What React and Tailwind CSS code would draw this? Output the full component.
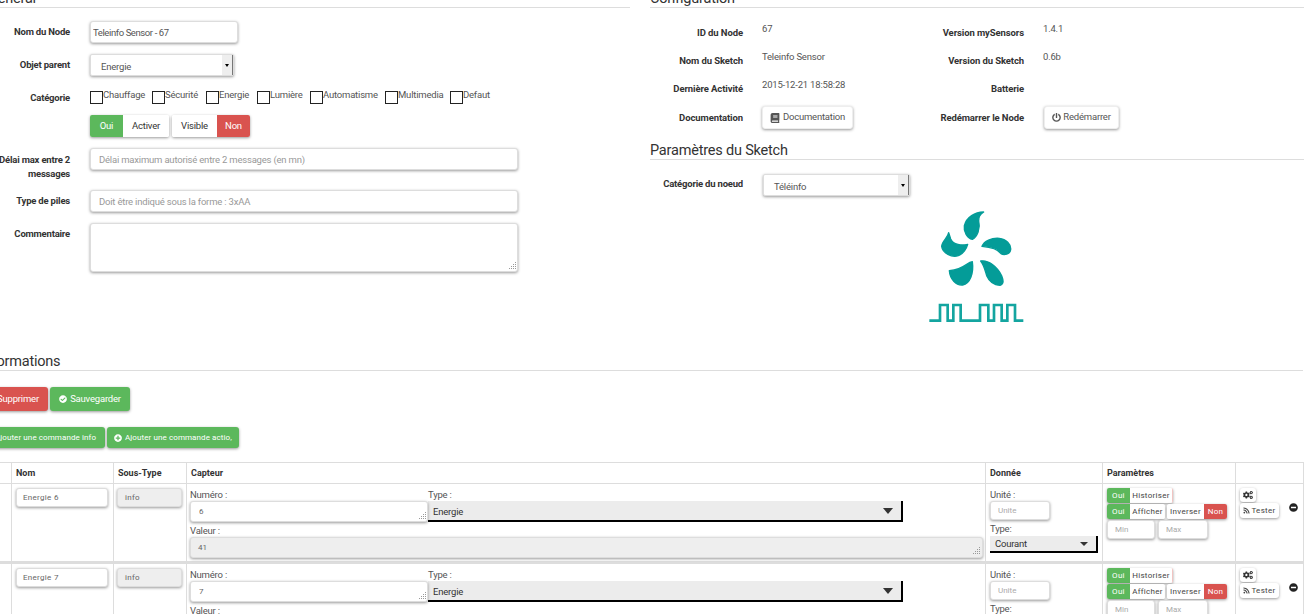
import React from "react";
import { FaBook, FaPowerOff, FaCheckCircle, FaPlusCircle, FaRss, FaCogs, FaMinusCircle } from "react-icons/fa";

const shadow = "shadow-[0_1px_3px_rgba(0,0,0,0.4)]";
const inputClass = `block border border-[#ddd] rounded-[3px] bg-white ${shadow} outline-none`;
const txt = "text-[9.5px] tracking-[-0.2px]";

function Grip() {
  return (
    <svg className="absolute right-[1px] bottom-[1px]" width="10" height="10" viewBox="0 0 10 10" fill="#999">
      <rect x="8" y="1" width="1" height="1" />
      <rect x="6" y="3" width="1" height="1" />
      <rect x="8" y="3" width="1" height="1" />
      <rect x="4" y="5" width="1" height="1" />
      <rect x="6" y="5" width="1" height="1" />
      <rect x="8" y="5" width="1" height="1" />
      <rect x="2" y="7" width="1" height="1" />
      <rect x="4" y="7" width="1" height="1" />
      <rect x="6" y="7" width="1" height="1" />
      <rect x="8" y="7" width="1" height="1" />
    </svg>
  );
}

function SectionTitle({ children, className }) {
  return (
    <h3 className={`flex h-[26px] items-end border-b border-[#ddd] text-[14.5px] leading-[16px] tracking-[-0.2px] text-[#333] ${className}`}>
      <span>{children}</span>
    </h3>
  );
}

function FormRow({ label, children, className, labelClass = "leading-[22px]" }) {
  return (
    <div className={`flex ${className}`}>
      <label className={`w-[82px] shrink-0 text-right font-bold text-[#333] ${txt} ${labelClass}`}>{label}</label>
      <div className="ml-[20px] flex-1">{children}</div>
    </div>
  );
}

function NativeSelect({ value, className }) {
  return (
    <div className={`flex items-stretch rounded-[2px] bg-white border border-[#ddd] ${shadow} ${className}`}>
      <span className={`flex-1 pl-[10px] leading-[23px] text-[#555] ${txt}`}>{value}</span>
      <span className="flex w-[11px] items-center justify-center border-r border-[#777] bg-[#eee]">
        <span className="border-x-[2px] border-t-[3px] border-x-transparent border-t-black" />
      </span>
    </div>
  );
}

function Check({ label, className }) {
  return (
    <div className={`flex items-start ${className}`}>
      <span className="mt-[1px] h-[13px] w-[13px] border border-[#222] bg-white" />
      <span className={`-mt-[1px] leading-[12px] text-[#555] ${txt}`}>{label}</span>
    </div>
  );
}

function InfoRow({ children, className }) {
  return <div className={`flex h-[28px] ${className}`}>{children}</div>;
}

function InfoLabel({ width, children }) {
  return <div className={`${width} shrink-0 pt-[4px] text-right text-[9.5px] font-bold leading-[14px] tracking-[-0.1px] text-[#333]`}>{children}</div>;
}

function InfoValue({ width, children }) {
  return <div className={`${width} ml-[19px] shrink-0 pt-[1px] leading-[12px] text-[#555] ${txt}`}>{children}</div>;
}

function Logo() {
  return (
    <svg width="115" height="125" viewBox="0 0 345 375" className="mx-auto block">
      <g fill="#049c98" stroke="#049c98" strokeWidth="4" strokeLinejoin="round">
        <path d="M191 21 C165 22 140 35 133 62 C130 80 142 100 157 103 C172 95 182 70 176 48 C175 38 180 28 191 21 Z" />
        <path d="M86 83 C84 98 66 108 65 124 C68 145 95 158 115 152 C130 147 140 130 143 118 C125 122 100 120 92 102 C90 95 88 89 86 83 Z" />
        <path d="M186 124 C192 108 215 98 238 100 C258 102 274 118 272 134 C270 148 252 152 243 146 C232 130 210 126 186 124 Z" />
        <path d="M157 170 C140 172 135 192 88 197 C90 222 108 242 128 240 C150 236 162 205 157 170 Z" />
        <path d="M182 168 C205 164 232 185 245 212 C250 225 253 235 240 241 C222 240 208 230 200 212 C195 195 192 180 182 168 Z" />
      </g>
      <path
        d="M28 347 H60 V300 H83 V347 H100 V300 H122 V347 H180 V300 H205 V347 H222 V300 H245 V347 H262 V300 H285 V347 H310"
        fill="none"
        stroke="#14a5a0"
        strokeWidth="8"
      />
    </svg>
  );
}

function Btn({ color, children, className }) {
  return <div className={`flex items-center justify-center whitespace-nowrap rounded-[3px] ${color} ${shadow} ${className}`}>{children}</div>;
}

function Small({ children, className }) {
  return <span className={`flex items-center justify-center text-[8px] tracking-[0.3px] ${className}`}>{children}</span>;
}

function CommandRow({ name, num, value }) {
  const cell = "border border-[#ddd] border-b-[3px] align-top p-0";
  return (
    <tr className="h-[79px]">
      <td className={cell} />
      <td className={cell}>
        <input readOnly value={name} className={`${inputClass} ml-[4px] mt-[4px] h-[19px] w-[92px] pl-[6px] text-[8px] tracking-[0.3px] text-[#666]`} />
      </td>
      <td className={cell}>
        <div className={`ml-[3px] mt-[4px] h-[19px] w-[65px] rounded-[3px] border border-[#ddd] bg-[#eee] pl-[7px] text-[8px] leading-[17px] tracking-[0.3px] text-[#666] ${shadow}`}>info</div>
      </td>
      <td className={cell}>
        <div className="flex pl-[3px] pt-[5px]">
          <div className="w-[238px]">
            <div className={`leading-[12px] text-[#555] ${txt}`}>Numéro :</div>
            <div className="relative">
              <input readOnly value={num} className={`${inputClass} h-[21px] w-[238px] pl-[8px] text-[8px] text-[#666]`} />
              <Grip />
            </div>
          </div>
          <div className="w-[475px]">
            <div className={`leading-[12px] text-[#555] ${txt}`}>Type :</div>
            <div className="flex h-[21px] items-center justify-between border-b-2 border-r-2 border-black bg-[#ececec] pl-[5px] pr-[8px]">
              <span className={`mt-[3px] text-[#333] ${txt}`}>Energie</span>
              <span className="border-x-[5px] border-t-[6px] border-x-transparent border-t-[#333]" />
            </div>
          </div>
        </div>
        <div className="pl-[3px] pr-[2px] pt-[3px]">
          <div className={`leading-[12px] text-[#555] ${txt}`}>Valeur :</div>
          <div className={`relative h-[21px] rounded-[3px] border border-[#ddd] bg-[#eee] pl-[7px] text-[8px] leading-[19px] text-[#666] ${shadow}`}>
            {value}
            <Grip />
          </div>
        </div>
      </td>
      <td className={cell}>
        <div className="pl-[4px] pt-[5px]">
          <div className={`leading-[12px] text-[#555] ${txt}`}>Unité :</div>
          <input readOnly placeholder="Unite" className={`${inputClass} h-[19px] w-[60px] pl-[7px] text-[8px] placeholder:text-[#aaa]`} />
          <div className={`mt-[3px] leading-[12px] text-[#555] ${txt}`}>Type:</div>
          <div className="mt-[1px] flex h-[17px] w-[108px] items-center justify-between border-b-2 border-r-2 border-black bg-[#ececec] pl-[5px] pr-[8px]">
            <span className={`mt-[2px] text-[#333] ${txt}`}>Courant</span>
            <span className="border-x-[4px] border-t-[4px] border-x-transparent border-t-[#333]" />
          </div>
        </div>
      </td>
      <td className={cell}>
        <div className="pl-[4px] pt-[4px]">
          <div className={`flex h-[15px] w-[66px] overflow-hidden rounded-[2px] border-r border-[#f2c4c2] ${shadow}`}>
            <Small className="w-[23px] bg-[#5cb85c] text-white">Oui</Small>
            <Small className="flex-1 bg-white text-[#444]">Historiser</Small>
          </div>
          <div className="mt-[1px] flex gap-[2px]">
            <div className={`flex h-[15px] w-[58px] overflow-hidden rounded-[2px] ${shadow}`}>
              <Small className="w-[23px] bg-[#5cb85c] text-white">Oui</Small>
              <Small className="flex-1 bg-white text-[#444]">Afficher</Small>
            </div>
            <div className={`flex h-[15px] w-[60px] overflow-hidden rounded-[2px] ${shadow}`}>
              <Small className="flex-1 bg-white text-[#444]">Inverser</Small>
              <Small className="w-[23px] bg-[#d9534f] text-white">Non</Small>
            </div>
          </div>
          <div className="mt-[1px] flex gap-[3px]">
            <input readOnly placeholder="Min" className={`${inputClass} h-[19px] w-[48px] pl-[7px] text-[8px] placeholder:text-[#aaa]`} />
            <input readOnly placeholder="Max" className={`${inputClass} h-[19px] w-[50px] pl-[7px] text-[8px] placeholder:text-[#aaa]`} />
          </div>
        </div>
      </td>
      <td className={cell}>
        <div className="flex pl-[4px] pt-[4px]">
          <div>
            <Btn color="bg-white" className="h-[14px] w-[16px] text-[#333]">
              <FaCogs size={10} />
            </Btn>
            <Btn color="bg-white" className="mt-[1px] h-[15px] w-[39px] gap-[1px] text-[8px] tracking-[0.3px] text-[#444]">
              <FaRss size={7} /> Tester
            </Btn>
          </div>
          <FaMinusCircle size={9} className="ml-[10px] mt-[15px] text-[#222]" />
        </div>
      </td>
    </tr>
  );
}

export default function App() {
  return (
    <div className="h-[614px] w-[1305px] overflow-hidden bg-white font-['Roboto',sans-serif]">
      <div className="-mt-[18px] -ml-[12px] w-[1315px]">
        <div className="flex">
          <div className="w-[642px] shrink-0">
            <SectionTitle>Général</SectionTitle>
            <FormRow label="Nom du Node" className="mt-[13px]">
              <input readOnly value="Teleinfo Sensor - 67" className={`${inputClass} h-[22px] w-[148px] pl-[2px] text-[9.5px] tracking-[-0.4px] text-[#555]`} />
            </FormRow>
            <FormRow label="Objet parent" className="mt-[11px]" labelClass="leading-[22px]">
              <NativeSelect value="Energie" className="h-[22px] w-[144px]" />
            </FormRow>
            <FormRow label="Catégorie" className="mt-[11px] h-[28px]" labelClass="leading-[22px]">
              <div className="flex pt-[3px]">
                <Check label="Chauffage" className="w-[62px]" />
                <Check label="Sécurité" className="w-[54px]" />
                <Check label="Energie" className="w-[51px]" />
                <Check label="Lumière" className="w-[53px]" />
                <Check label="Automatisme" className="w-[75px]" />
                <Check label="Multimedia" className="w-[65px]" />
                <Check label="Defaut" />
              </div>
            </FormRow>
            <FormRow label="">
              <div className="flex gap-[3px]">
                <div className={`flex h-[22px] w-[79px] overflow-hidden rounded-[2px] ${txt} ${shadow}`}>
                  <span className="flex w-[33px] items-center justify-center bg-[#5cb85c] text-white">Oui</span>
                  <span className="flex flex-1 items-center justify-center bg-white text-[#333]">Activer</span>
                </div>
                <div className={`flex h-[22px] w-[78px] overflow-hidden rounded-[2px] ${shadow} ${txt}`}>
                  <span className="flex flex-1 items-center justify-center bg-white text-[#333]">Visible</span>
                  <span className="flex w-[33px] items-center justify-center bg-[#d9534f] text-white">Non</span>
                </div>
              </div>
            </FormRow>
            <FormRow label="Délai max entre 2 messages" className="mt-[11px]" labelClass="pt-[5px] leading-[14px]">
              <input readOnly placeholder="Délai maximum autorisé entre 2 messages (en mn)" className={`${inputClass} h-[22px] w-[428px] pl-[8px] ${txt} placeholder:text-[#999]`} />
            </FormRow>
            <FormRow label="Type de piles" className="mt-[9px]">
              <input readOnly placeholder="Doit être indiqué sous la forme : 3xAA" className={`${inputClass} h-[22px] w-[428px] pl-[8px] ${txt} placeholder:text-[#999]`} />
            </FormRow>
            <FormRow label="Commentaire" className="mt-[11px]">
              <div className="relative w-[428px]">
                <textarea readOnly className={`${inputClass} h-[49px] w-[428px] resize-none`} />
                <Grip />
              </div>
            </FormRow>
          </div>

          <div className="ml-[20px] flex-1">
            <SectionTitle>Configuration</SectionTitle>
            <div className="pt-[14px]">
              <InfoRow>
                <InfoLabel width="w-[93px]">ID du Node</InfoLabel>
                <InfoValue width="w-[262px]">67</InfoValue>
                <InfoLabel width="w-[0px] whitespace-nowrap flex justify-end">Version mySensors</InfoLabel>
                <InfoValue>1.4.1</InfoValue>
              </InfoRow>
              <InfoRow>
                <InfoLabel width="w-[93px]">Nom du Sketch</InfoLabel>
                <InfoValue width="w-[262px]">Teleinfo Sensor</InfoValue>
                <InfoLabel width="w-[0px] whitespace-nowrap flex justify-end">Version du Sketch</InfoLabel>
                <InfoValue>0.6b</InfoValue>
              </InfoRow>
              <InfoRow>
                <InfoLabel width="w-[93px]">Dernière Activité</InfoLabel>
                <InfoValue width="w-[262px]">2015-12-21 18:58:28</InfoValue>
                <InfoLabel width="w-[0px] whitespace-nowrap flex justify-end">Batterie</InfoLabel>
              </InfoRow>
              <div className="flex items-start">
                <InfoLabel width="w-[93px] pt-[5px]">Documentation</InfoLabel>
                <Btn color="bg-white" className={`ml-[19px] h-[23px] w-[91px] gap-[3px] border border-[#eee] text-[#555] ${txt}`}>
                  <FaBook size={10} /> Documentation
                </Btn>
                <div className="ml-[171px] flex w-0 justify-end whitespace-nowrap pt-[5px] text-[9.5px] font-bold leading-[14px] tracking-[-0.1px] text-[#333]">Redémarrer le Node</div>
                <Btn color="bg-white" className={`ml-[20px] h-[23px] w-[75px] gap-[2px] border border-[#eee] text-[#555] ${txt}`}>
                  <FaPowerOff size={9} /> Redémarrer
                </Btn>
              </div>
            </div>
            <SectionTitle className="mt-[5px]">Paramètres du Sketch</SectionTitle>
            <div className="flex items-start pt-[14px]">
              <div className={`w-[93px] pt-[3px] text-right font-bold leading-[14px] text-[#333] ${txt}`}>Catégorie du noeud</div>
              <NativeSelect value="Téléinfo" className="ml-[20px] h-[22px] w-[147px]" />
            </div>
            <div className="mt-[9px] w-[654px]">
              <Logo />
            </div>
          </div>
        </div>

        <SectionTitle className="mt-[15px] -ml-[8px]">Informations</SectionTitle>
        <div className="mt-[16px] flex gap-[2px]">
          <Btn color="bg-[#d9534f]" className={`h-[24px] w-[60px] text-white ${txt}`}>Supprimer</Btn>
          <Btn color="bg-[#5cb85c]" className={`h-[24px] w-[80px] gap-[3px] text-white ${txt}`}>
            <FaCheckCircle size={8} /> Sauvegarder
          </Btn>
        </div>
        <div className="mt-[16px] -ml-[13px] flex gap-[2px]">
          <Btn color="bg-[#5cb85c]" className="h-[21px] w-[130px] gap-[3px] text-[8px] tracking-[0.1px] text-white">
            <FaPlusCircle size={8} /> Ajouter une commande info
          </Btn>
          <Btn color="bg-[#5cb85c]" className="h-[21px] w-[132px] gap-[3px] text-[8px] tracking-[0.1px] text-white">
            <FaPlusCircle size={8} /> Ajouter une commande actio,
          </Btn>
        </div>
        <table className="mt-[14px] w-[1315px] table-fixed border-collapse">
          <colgroup>
            <col className="w-[23px]" />
            <col className="w-[102px]" />
            <col className="w-[73px]" />
            <col className="w-[799px]" />
            <col className="w-[117px]" />
            <col className="w-[133px]" />
            <col className="w-[68px]" />
          </colgroup>
          <thead>
            <tr className="h-[21px] text-left text-[9px] font-bold text-[#333]">
              <th className="border border-[#ddd]" />
              <th className="border border-[#ddd] pl-[4px] pt-[2px]">Nom</th>
              <th className="border border-[#ddd] pl-[4px] pt-[2px]">Sous-Type</th>
              <th className="border border-[#ddd] pl-[4px] pt-[2px]">Capteur</th>
              <th className="border border-[#ddd] pl-[4px] pt-[2px]">Donnée</th>
              <th className="border border-[#ddd] pl-[4px] pt-[2px]">Paramètres</th>
              <th className="border border-[#ddd]" />
            </tr>
          </thead>
          <tbody>
            <CommandRow name="Energie 6" num="6" value="41" />
            <CommandRow name="Energie 7" num="7" value="" />
          </tbody>
        </table>
      </div>
    </div>
  );
}
